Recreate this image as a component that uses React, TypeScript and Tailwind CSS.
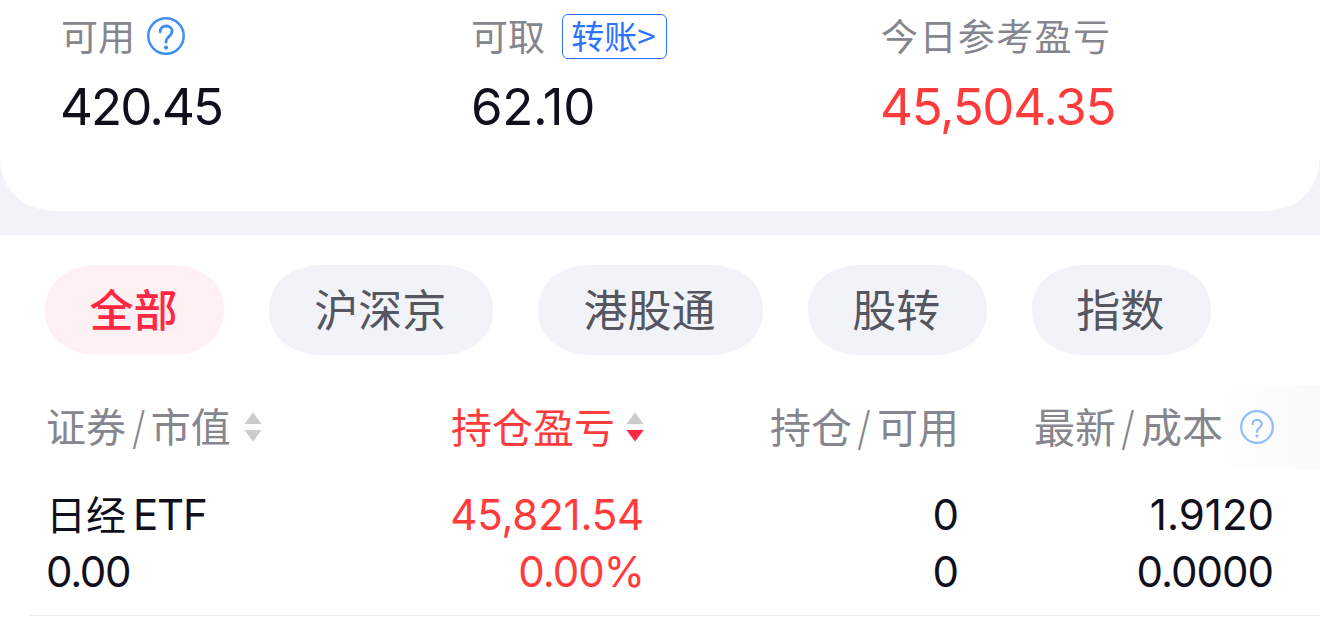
import type { ReactNode } from 'react';
import clsx from 'clsx';

type SortDir = 'none' | 'desc';

const tabs = ['全部', '沪深京', '港股通', '股转', '指数'];

const holdings = [
  {
    name: '日经',
    suffix: 'ETF',
    marketValue: '0.00',
    profit: '45,821.54',
    profitRate: '0.00%',
    quantity: '0',
    available: '0',
    price: '1.9120',
    cost: '0.0000',
  },
];

function HelpIcon({ className, compact = false }: { className: string; compact?: boolean }) {
  return (
    <svg viewBox="0 0 38 38" fill="none" className={className} aria-hidden>
      <circle cx="19" cy="19" r="17.7" stroke="currentColor" strokeWidth="2.5" />
      <g transform={compact ? 'translate(2.850 3.800) scale(0.850 0.820)' : undefined}>
        <path
          d="M13.200 14.700c0-3.500 2.500-5.700 5.900-5.700s6 2.200 6 5.300c0 2.300-1.200 3.500-3 5-2 1.700-3 2.800-3 5v.9"
          stroke="currentColor"
          strokeWidth="2.9"
          strokeLinecap="round"
        />
        <circle cx="19" cy="30.600" r="2.100" fill="currentColor" />
      </g>
    </svg>
  );
}

function SortIcon({ dir, className }: { dir: SortDir; className?: string }) {
  return (
    <svg viewBox="0 0 18 30" className={clsx('h-[30px] w-[18px] shrink-0', className)} aria-hidden>
      <path d="M9 0.500 17.600 12H0.400z" fill="#cccccc" />
      <path d="M0.400 18h17.200L9 29.500z" fill={dir === 'desc' ? '#ff2741' : '#cccccc'} />
    </svg>
  );
}

function Metric({ label, value, valueClass }: { label: ReactNode; value: string; valueClass: string }) {
  return (
    <div className="w-[410px] shrink-0">
      <div className="flex h-12 items-center text-[#86868e]">{label}</div>
      <div
        className={clsx(
          'flex h-[92px] items-center font-[Inter,sans-serif] text-[51px] leading-none',
          valueClass,
        )}
      >
        {value}
      </div>
    </div>
  );
}

function Slash() {
  return <span className="mx-[4.5px] scale-x-80">/</span>;
}

const App = () => {
  return (
    <main className="h-[619px] w-[1320px] overflow-hidden bg-[#f2f3f8] font-['Noto_Sans_CJK_SC',sans-serif]">
      <section className="flex h-[211px] rounded-b-[60px] bg-white pt-3 pl-[61px] [corner-shape:superellipse(1.25)]">
        <Metric
          label={
            <>
              <span className="pb-0.5 text-[37px] leading-none">可用</span>
              <HelpIcon className="ml-3 size-[38px] text-[#3f8df5]" />
            </>
          }
          value="420.45"
          valueClass="-ml-px text-[#0f101c] tracking-[-1.9px]"
        />
        <Metric
          label={
            <>
              <span className="pb-0.5 text-[37px] leading-none">可取</span>
              <button
                type="button"
                className="ml-[17px] flex h-[45px] w-[105px] items-center justify-center rounded-md border border-[#2b72ff] pr-0.5 pb-0.5 text-[33px] leading-none text-[#2b72ff]"
              >
                转账&gt;
              </button>
            </>
          }
          value="62.10"
          valueClass="text-[#0f101c] tracking-[-0.4px]"
        />
        <Metric
          label={<span className="pb-0.5 text-[37px] leading-none tracking-[1.4px]">今日参考盈亏</span>}
          value="45,504.35"
          valueClass="-ml-px text-[#ff3b3b] tracking-[-1.3px]"
        />
      </section>

      <section className="mt-6 h-[384px] bg-white pt-[30px]">
        <nav className="flex gap-[45px] pl-[45px]">
          {tabs.map((tab, i) => (
            <button
              key={tab}
              type="button"
              className={clsx(
                'flex h-[90px] shrink-0 items-center justify-center rounded-[54px/45px] pr-0.5 pb-1 text-[44px] leading-none [corner-shape:superellipse(1.12)]',
                tab.length === 3 ? 'w-[224.2px]' : 'w-[179.2px]',
                i === 0 ? 'bg-[#fff1f3] font-medium text-[#ff2741]' : 'bg-[#f2f3f8] text-[#555660]',
              )}
            >
              {tab}
            </button>
          ))}
        </nav>

        <div className="mt-[30px] flex h-[84px] items-center bg-linear-to-r from-white from-[91%] to-[#fafafa] pb-1 pl-[46px] text-[41px] leading-none text-[#86868e]">
          <div className="flex w-[282px] items-center text-[40px]">
            证券
            <Slash />
            市值
            <SortIcon dir="none" className="mt-1 ml-[13px]" />
          </div>
          <div className="flex w-[316px] items-center justify-end text-[#ff3b3b]">
            持仓盈亏
            <SortIcon dir="desc" className="mt-1 ml-[11px]" />
          </div>
          <div className="flex w-[315px] items-center justify-end">
            持仓
            <Slash />
            可用
          </div>
          <div className="flex w-[315px] items-center justify-end">
            最新
            <Slash />
            成本
            <HelpIcon className="mt-1 ml-[17px] size-[34px] shrink-0 text-[#8fbefb]" compact />
          </div>
        </div>

        {holdings.map((h) => (
          <div
            key={h.name}
            className="ml-[30px] flex border-b border-[#ebebeb] pt-[17px] pr-[46px] pb-[15px] pl-4 font-[Inter,sans-serif] text-[42px] leading-[57px] text-[#0f101c]"
          >
            <div className="w-[282px]">
              <div className="flex h-[57px] items-center">
                <span className="pb-[3px] font-['Noto_Sans_CJK_SC',sans-serif] text-[40px] leading-none">
                  {h.name}
                </span>
                <span className="ml-[7px] tracking-[-1.2px]">{h.suffix}</span>
              </div>
              <div className="tracking-[-1.3px]">{h.marketValue}</div>
            </div>
            <div className="w-[316px] text-right text-[#ff3b3b]">
              <div className="tracking-[-0.2px]">{h.profit}</div>
              <div className="tracking-[-1px]">{h.profitRate}</div>
            </div>
            <div className="w-[315px] text-right">
              <div>{h.quantity}</div>
              <div>{h.available}</div>
            </div>
            <div className="w-[315px] text-right">
              <div>{h.price}</div>
              <div className="pr-px tracking-[-1px]">{h.cost}</div>
            </div>
          </div>
        ))}
      </section>
    </main>
  );
};

export default App;
